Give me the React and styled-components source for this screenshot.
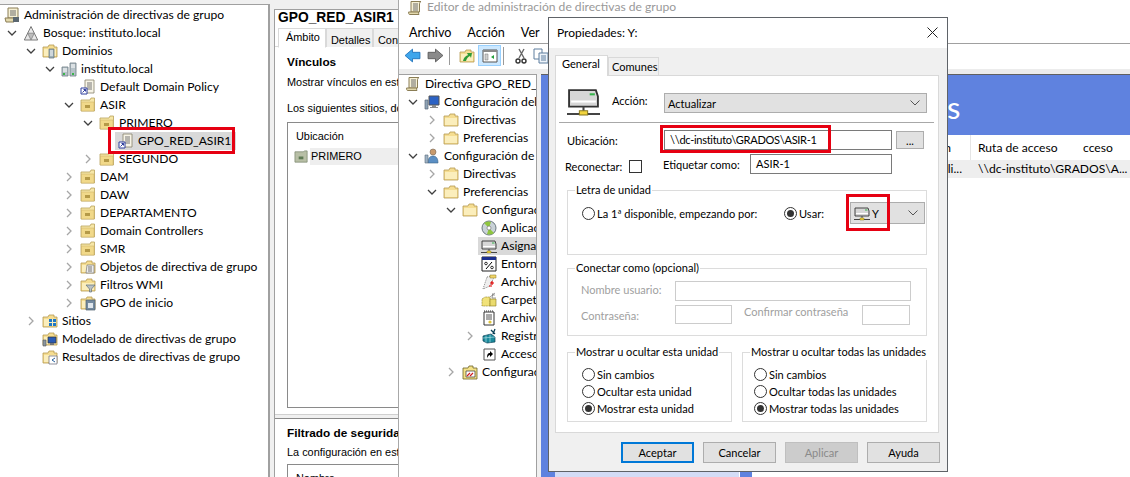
import React from 'react'
import styled, { createGlobalStyle } from 'styled-components'

const UI_FONT = 'Lato, "Open Sans", sans-serif'

const GlobalStyle = createGlobalStyle`
  html, body { margin: 0; padding: 0; background: #f0f0f0; }
  body { font-family: ${UI_FONT}; font-size: 12.1px; color: #000; }
  * { box-sizing: border-box; }
`

function Icon({ kind, size = 16 }) {
  const folder = (
    <>
      <path d="M1 4h5l1-2h5v2h3v10H1z" fill="#f5dd91" stroke="#b59a50" strokeWidth=".8" />
      <path d="M2 6h12v7H2z" fill="#fbeebc" />
    </>
  )
  const parts = {
    script: (
      <>
        <path d="M4 1h10v10H4z" fill="#f6f0d4" stroke="#8a7d55" />
        <path d="M6 4h6M6 6h6M6 8h6" stroke="#6d6d6d" />
        <path d="M1 11h9v4H2z" fill="#e3d9ad" stroke="#8a7d55" />
        <path d="M9 10h6v5H9z" fill="#5b6770" />
      </>
    ),
    scroll: (
      <>
        <path d="M4 1.5h10c-1 .5-1.500 1.500-1.500 2.500v8H4z" fill="#f6f0d4" stroke="#8a7d55" />
        <path d="M6 4h5M6 6h5M6 8h5M6 10h5" stroke="#6d6d6d" />
        <path d="M1.500 12h10c0 1.500 .5 2.500 .5 2.500H2.500c-.7 0-1-1.500-1-2.500z" fill="#e3d9ad" stroke="#8a7d55" />
      </>
    ),
    forest: (
      <>
        <path d="M8 1.500l6.700 13.500H1.300z" fill="#e8e8e8" stroke="#7a7a7a" />
        <path d="M4.700 8.200h6.600L8 15z" fill="#bcbcbc" stroke="#7a7a7a" strokeWidth=".7" />
      </>
    ),
    domains: (
      <>
        {folder}
        <path d="M7 6h5v9H7z" fill="#9fb0b8" stroke="#5c6d75" strokeWidth=".7" />
        <path d="M8 8h3M8 10h3M8 12h3" stroke="#fff" />
      </>
    ),
    domain: (
      <>
        <path d="M1 6h6v9H1zM9 2h6v13H9z" fill="#b6c2c8" stroke="#6c7c84" strokeWidth=".8" />
        <path d="M2 8h4M2 10h4M10 4h4M10 6h4" stroke="#fff" />
        <path d="M2 13h2M11 13h2" stroke="#39b54a" strokeWidth="2" />
      </>
    ),
    gpo: (
      <>
        <path d="M5 1h9v13H5z" fill="#f7f4e6" stroke="#85806a" strokeWidth=".8" />
        <path d="M7 4h5M7 6h5M7 8h5M7 10h5" stroke="#777" />
        <path d="M1 9h6v6H1z" fill="#fff" stroke="#2f3f9e" />
        <path d="M2.500 13.500l3-3M3.500 10.500h2v2" stroke="#2f3f9e" fill="none" />
      </>
    ),
    ou: (
      <>
        <path d="M1 3h9l1-2h3.500v13H1z" fill="#f6e6a6" stroke="#b9a25c" strokeWidth=".8" />
        <path d="M1.500 5h12.500v9H1.500z" fill="#f1d98a" stroke="#c9ad62" strokeWidth=".5" />
        <path d="M5 8h5v3H5z" fill="#b59a48" />
      </>
    ),
    ouGreen: (
      <>
        <path d="M1 3h9l1-1h3v12H1z" fill="#b8bfa6" stroke="#7f8a72" strokeWidth=".8" />
        <path d="M5 8h5v3H5z" fill="#5f7a55" />
      </>
    ),
    gpos: (
      <>
        {folder}
        <path d="M7 6h7v8H6z" fill="#eee" stroke="#777" strokeWidth=".7" />
        <path d="M8 8h4M8 10h4M8 12h4" stroke="#777" />
      </>
    ),
    filter: (
      <>
        {folder}
        <path d="M6 8h9l-3.500 4v3h-2v-3z" fill="#b9c0c4" stroke="#60707a" strokeWidth=".7" />
      </>
    ),
    starter: (
      <>
        {folder}
        <path d="M6 5h9v10H6z" fill="#748a9f" stroke="#4e5f6f" strokeWidth=".7" />
        <path d="M8 8h5v5H8z" fill="#dfe6ec" />
      </>
    ),
    sites: (
      <>
        {folder}
        <path d="M7 6h3v3H7zM11 6h3v3h-3zM7 10h3v3H7zM11 10h3v3h-3z" fill="#1f78c8" />
      </>
    ),
    model: (
      <>
        {folder}
        <path d="M6 6h8v6H6z" fill="#2a5bb5" stroke="#333" strokeWidth=".7" />
        <path d="M1 9h3v6H1z" fill="#8a96a0" stroke="#555" strokeWidth=".6" />
        <path d="M8 12h4v2H8z" fill="#777" />
      </>
    ),
    results: (
      <>
        {folder}
        <path d="M7 7h8v8H7z" fill="#fff" stroke="#667" strokeWidth=".7" />
        <path d="M13 9l-3 2 3 2" stroke="#27609c" fill="none" />
      </>
    ),
    computer: (
      <>
        <path d="M5 2h10v9H5z" fill="#2c62c4" stroke="#555" />
        <path d="M8 11h4v2H8zM6 13h8v1H6z" fill="#8b8b8b" />
        <path d="M1 6h3v9H1z" fill="#8fa3b5" stroke="#59697a" strokeWidth=".7" />
      </>
    ),
    user: (
      <>
        <circle cx="9" cy="4" r="3" fill="#c89a6c" stroke="#765" strokeWidth=".6" />
        <path d="M4 15c0-5 2-7 5-7s5 2 5 7z" fill="#5b8fc4" stroke="#3d6488" strokeWidth=".6" />
        <path d="M1 7h3v8H1z" fill="#9fb2c4" stroke="#59697a" strokeWidth=".6" />
      </>
    ),
    folder,
    disc: (
      <>
        <circle cx="8" cy="8" r="7" fill="#c9d2d8" stroke="#6b7780" />
        <path d="M8 8L3 3a7 7 0 0 1 7-1zM8 8l5 5a7 7 0 0 1-7 1z" fill="#8fc63f" />
        <circle cx="8" cy="8" r="2" fill="#fff" stroke="#666" strokeWidth=".6" />
      </>
    ),
    drive: (
      <>
        <path d="M1 3h13l1 3v5H1z" fill="#d6d6d6" stroke="#333" strokeWidth=".9" />
        <path d="M2 8h12v1H2z" fill="#fff" />
        <path d="M11 4.500h2.500v1H11z" fill="#34b34a" />
        <path d="M8 11v2" stroke="#444" />
        <path d="M0 14.500h16" stroke="#444" />
        <path d="M6 13h4v2H6z" fill="#f2d43d" stroke="#8a7a20" strokeWidth=".5" />
      </>
    ),
    percent: (
      <>
        <path d="M1 1h14v14H1z" fill="#fff" stroke="#222" />
        <path d="M1 1h14v3H1z" fill="#1c2f8f" />
        <path d="M5 13l6-7" stroke="#000" />
        <circle cx="5" cy="7.500" r="1.300" fill="none" stroke="#000" strokeWidth=".8" />
        <circle cx="11" cy="11.500" r="1.300" fill="none" stroke="#000" strokeWidth=".8" />
      </>
    ),
    fileRed: (
      <>
        <path d="M6 3l8-2-5 11-7 3z" fill="#efefef" stroke="#555" strokeWidth=".7" strokeDasharray="1 1" />
        <path d="M9 1h6v3H9z" fill="#f1d56a" stroke="#8a7a20" strokeWidth=".5" />
        <path d="M11 7v4M9 9h4M8 12h3" stroke="#e00000" strokeWidth="1.2" />
      </>
    ),
    folderStar: (
      <>
        <path d="M1 7l3-2h5v9H1z" fill="#f1e27a" stroke="#8a7a20" strokeWidth=".7" strokeDasharray="1 .6" />
        <path d="M9 5l5-4M11 6h4M11 3l3 0M12 1l-1 5" stroke="#777" strokeWidth=".7" />
        <path d="M9 7h6v7H9z" fill="#eadb6e" stroke="#8a7a20" strokeWidth=".6" />
      </>
    ),
    notepad: (
      <>
        <path d="M3 2h10v13H3z" fill="#fff" stroke="#333" />
        <path d="M3 1h10" stroke="#333" strokeDasharray="1 1" />
        <path d="M5 5h6M5 7h6M5 9h6" stroke="#555" />
        <circle cx="9" cy="12" r="1.600" fill="#e0c53a" />
      </>
    ),
    registry: (
      <>
        <path d="M2 8l8-2 4 3v5l-8 1-4-2z" fill="#1b8a9c" stroke="#0a3f55" strokeWidth=".7" />
        <path d="M2 10l12-1M5 7.500v7M9 6.500v8" stroke="#bfe9ef" strokeWidth=".6" />
        <path d="M10 2l4 4M14 1l-2 5" stroke="#0a3f55" strokeWidth="1.3" />
      </>
    ),
    shortcut: (
      <>
        <path d="M3 3h11v11H3z" fill="#fff" stroke="#555" />
        <path d="M6 12c0-4 1-5 3-5V5l3 3-3 3V9c-1 0-2 1-3 3z" fill="#000" />
      </>
    ),
    panel: (
      <>
        <path d="M1 4h5l1-2h4v2h4v11H1z" fill="#f3e187" stroke="#6d6226" strokeWidth=".8" />
        <path d="M4 7h9v6H4z" fill="#fff" stroke="#333" strokeWidth=".7" />
        <path d="M5 12l3-3M8 12l3-3" stroke="#d01c1c" strokeWidth="1.2" />
      </>
    ),
    back: (
      <path d="M1 8l7-6v3h7v6H8v3z" fill="#3fa6ec" stroke="#1c6fb8" strokeWidth=".8" />
    ),
    forward: (
      <path d="M15 8L8 2v3H1v6h7v3z" fill="#8a8a8a" stroke="#555" strokeWidth=".8" />
    ),
    up: (
      <>
        {folder}
        <path d="M4 13c1-4 3-5 5-6l-1-2 5 0-1 5-1-2c-2 1-3 2-4 5z" fill="#2f9a36" />
      </>
    ),
    view: (
      <>
        <path d="M1 2h14v12H1z" fill="#fff" stroke="#555" />
        <path d="M1 2h14v2H1z" fill="#8a8a8a" />
        <path d="M3 6h3v6H3z" fill="#cfcfcf" stroke="#777" strokeWidth=".5" />
        <path d="M12 7v4L9 9z" fill="#23a03c" />
      </>
    ),
    cut: (
      <>
        <path d="M11 1L6 10M6 1l5 9" stroke="#666" strokeWidth="1.4" />
        <circle cx="5" cy="13" r="2" fill="none" stroke="#333" strokeWidth="1.4" />
        <circle cx="11" cy="13" r="2" fill="none" stroke="#333" strokeWidth="1.4" />
      </>
    ),
    copy: (
      <>
        <path d="M1 1h8v10H1z" fill="#fff" stroke="#5f7f9f" />
        <path d="M6 5h9v10H6z" fill="#eef4fa" stroke="#5f7f9f" />
        <path d="M8 8h5M8 10h5M8 12h5" stroke="#5f7f9f" />
      </>
    ),
  }
  return (
    <svg width={size} height={size} viewBox="0 0 16 16" style={{ flex: 'none', display: 'block' }}>
      {parts[kind]}
    </svg>
  )
}

const Canvas = styled.div`
  position: relative;
  width: 1130px;
  height: 477px;
  overflow: hidden;
  background: #f0f0f0;
`

const ConsolePane = styled.section`
  position: absolute;
  left: 0;
  top: 4px;
  width: 270px;
  height: 473px;
  background: #fff;
  border-top: 1px solid #a0a0a0;
  border-right: 2px solid #a0a0a0;
  padding-top: 1px;
`

const TreeList = styled.div`
  display: flex;
  flex-direction: column;
  overflow: hidden;
`

const Row = styled.div`
  display: flex;
  align-items: center;
  height: 18px;
  white-space: nowrap;
  padding-left: ${p => p.$base + p.$depth * 19}px;
`

const CaretBox = styled.span`
  width: 16px;
  margin-left: -16px;
  flex: none;
  display: flex;
  justify-content: flex-start;
`

const Chip = styled.span`
  display: flex;
  align-items: center;
  gap: 4px;
  height: 18px;
  margin-left: ${p => (p.$selected ? -3 : 0)}px;
  padding: 0 ${p => (p.$selected ? 5 : 0)}px 0 ${p => (p.$selected ? 3 : 0)}px;
  background: ${p => (p.$selected ? '#d9d9d9' : 'transparent')};
  flex: ${p => (p.$fill ? 1 : 'none')};
`

const RowLabel = styled.span`
  position: relative;
  top: -1px;
`

function Caret({ state }) {
  if (!state) return <CaretBox />
  return (
    <CaretBox>
      <svg width="10" height="10" viewBox="0 0 10 10">
        {state === 'open' ? (
          <path d="M1 3l4 4 4-4" fill="none" stroke="#404040" strokeWidth="1.3" />
        ) : (
          <path d="M3 1l4 4-4 4" fill="none" stroke="#a6a6a6" strokeWidth="1.3" />
        )}
      </svg>
    </CaretBox>
  )
}

function Tree({ items, base }) {
  return (
    <TreeList>
      {items.map(([depth, caret, kind, label, selected, fill], i) => (
        <Row key={i} $base={base} $depth={depth}>
          <Caret state={caret} />
          <Chip $selected={selected} $fill={fill}>
            <Icon kind={kind} />
            <RowLabel>{label}</RowLabel>
          </Chip>
        </Row>
      ))}
    </TreeList>
  )
}

const consoleTree = [
  [0, null, 'script', 'Administración de directivas de grupo'],
  [1, 'open', 'forest', 'Bosque: instituto.local'],
  [2, 'open', 'domains', 'Dominios'],
  [3, 'open', 'domain', 'instituto.local'],
  [4, null, 'gpo', 'Default Domain Policy'],
  [4, 'open', 'ou', 'ASIR'],
  [5, 'open', 'ou', 'PRIMERO'],
  [6, null, 'gpo', 'GPO_RED_ASIR1', true],
  [5, 'closed', 'ou', 'SEGUNDO'],
  [4, 'closed', 'ou', 'DAM'],
  [4, 'closed', 'ou', 'DAW'],
  [4, 'closed', 'ou', 'DEPARTAMENTO'],
  [4, 'closed', 'ou', 'Domain Controllers'],
  [4, 'closed', 'ou', 'SMR'],
  [4, 'closed', 'gpos', 'Objetos de directiva de grupo'],
  [4, 'closed', 'filter', 'Filtros WMI'],
  [4, 'closed', 'starter', 'GPO de inicio'],
  [2, 'closed', 'sites', 'Sitios'],
  [2, null, 'model', 'Modelado de directivas de grupo'],
  [2, null, 'results', 'Resultados de directivas de grupo'],
]

const editorTree = [
  [0, null, 'scroll', 'Directiva GPO_RED_ASIR1'],
  [1, 'open', 'computer', 'Configuración del equipo'],
  [2, 'closed', 'folder', 'Directivas'],
  [2, 'closed', 'folder', 'Preferencias'],
  [1, 'open', 'user', 'Configuración de usuario'],
  [2, 'closed', 'folder', 'Directivas'],
  [2, 'open', 'folder', 'Preferencias'],
  [3, 'open', 'folder', 'Configuración de Windows'],
  [4, null, 'disc', 'Aplicaciones'],
  [4, null, 'drive', 'Asignaciones de unidades', true, true],
  [4, null, 'percent', 'Entorno'],
  [4, null, 'fileRed', 'Archivos'],
  [4, null, 'folderStar', 'Carpetas'],
  [4, null, 'notepad', 'Archivos ini'],
  [4, 'closed', 'registry', 'Registro'],
  [4, null, 'shortcut', 'Accesos directos'],
  [3, 'closed', 'panel', 'Configuración del Panel de control'],
]

const SelectionBox = styled.div`
  position: absolute;
  left: ${p => p.$x}px;
  top: ${p => p.$y}px;
  width: ${p => p.$w}px;
  height: ${p => p.$h}px;
  border: 3px solid #e60012;
  pointer-events: none;
  z-index: 5;
`

const ScopePane = styled.section`
  position: absolute;
  left: 274px;
  top: 9px;
  width: 130px;
  height: 468px;
  background: #fff;
  border-top: 1px solid #a0a0a0;
  border-left: 1px solid #a0a0a0;
  overflow: hidden;
  font-family: "Liberation Sans", Arial, sans-serif;
  font-size: 10.9px;
  white-space: nowrap;
`

const ScopeTitle = styled.h2`
  margin: 0;
  height: 18px;
  padding: 0 0 0 3px;
  font-size: 13.8px;
  line-height: 15px;
  font-weight: 700;
`

const ScopeTabs = styled.div`
  display: flex;
  height: 19px;
  padding-left: 3px;
  border-bottom: 1px solid #d9d9d9;
`

const ScopeTab = styled.div`
  flex: none;
  width: ${p => p.$w}px;
  padding: ${p => (p.$active ? '2px 0 0 7px' : '5px 0 0 4px')};
  border: 1px solid #d9d9d9;
  border-bottom: ${p => (p.$active ? '1px solid #fff' : 'none')};
  background: ${p => (p.$active ? '#fff' : '#f0f0f0')};
  height: ${p => (p.$active ? 20 : 19)}px;
`

const ScopeBody = styled.div`
  padding: ${p => p.$top}px 0 0 12px;
`

const ScopeHeading = styled.div`
  font-weight: 700;
  font-size: 11.8px;
  height: 16px;
`

const ScopeText = styled.div`
  margin-top: ${p => p.$gap}px;
  height: 14px;
`

const ListBox = styled.div`
  margin-top: ${p => p.$gap}px;
  height: ${p => p.$h}px;
  border: 1px solid #8a8a8a;
  padding: 7px 0 0 6px;
`

const ListHeader = styled.div`
  padding-left: 2px;
`

const ListRow = styled.div`
  margin-top: 6px;
  display: flex;
  align-items: center;
  height: 17px;
  gap: 1px;
`

const ListCell = styled.span`
  flex: 1;
  background: #eeeeee;
  line-height: 17px;
  padding-left: 1px;
`

const Splitter = styled.div`
  margin: 6px 0 0;
  height: 5px;
  background: #f0f0f0;
  border-top: 1px solid #d0d0d0;
  border-bottom: 1px solid #8a8a8a;
`

const EditorWindow = styled.section`
  position: absolute;
  left: 398px;
  top: 0;
  width: 732px;
  height: 477px;
  background: #fff;
  border-left: 1px solid #a8a8a8;
  display: flex;
  flex-direction: column;
`

const EditorTitle = styled.div`
  height: 20px;
  display: flex;
  align-items: flex-start;
  gap: 4px;
  padding-left: 8px;
  color: #999;
  line-height: 13px;
`

const MenuBar = styled.div`
  height: 24px;
  display: flex;
  gap: 16px;
  padding: 5px 0 0 10px;
  border-bottom: 1px solid #a0a0a0;
  font-size: 12.6px;
`

const Toolbar = styled.div`
  height: 23px;
  display: flex;
  align-items: center;
  padding-left: 2px;
`

const ToolButton = styled.span`
  flex: none;
  width: ${p => p.$w || 23}px;
  height: 21px;
  display: flex;
  align-items: center;
  justify-content: center;
  border: 1px solid ${p => (p.$on ? '#99d1ff' : 'transparent')};
  background: ${p => (p.$on ? '#cce8ff' : 'transparent')};
`

const ToolSeparator = styled.span`
  flex: none;
  width: 1px;
  height: 18px;
  background: #9a9a9a;
  margin: 0 ${p => p.$right}px 0 ${p => p.$left}px;
`

const ToolStrip = styled.div`
  height: 7px;
  background: linear-gradient(#fff 0, #fff 2px, #ececec 2px);
`

const EditorMain = styled.div`
  flex: 1;
  display: flex;
  min-height: 0;
`

const EditorTreePane = styled.div`
  width: 138px;
  flex: none;
  background: #fff;
  border-top: 1px solid #a0a0a0;
  border-right: 1px solid #a0a0a0;
  overflow: hidden;
`

const PaneGap = styled.div`
  width: 4px;
  flex: none;
  background: #f0f0f0;
`

const ResultPane = styled.div`
  flex: 1;
  display: flex;
  flex-direction: column;
  border-top: 1px solid #606060;
`

const Banner = styled.div`
  height: 60px;
  flex: none;
  background: #5f82df;
  color: #fff;
  font-size: 31px;
  padding: 12px 0 0 406px;
  line-height: 40px;
`

const ResultBody = styled.div`
  flex: 1;
  display: flex;
`

const BlueColumn = styled.div`
  width: 211px;
  flex: none;
  background: #5f82df;
  position: relative;
`

const PaleInset = styled.div`
  position: absolute;
  left: 14px;
  width: 185px;
  bottom: 0;
  height: 5px;
  background: #d3dcf6;
  border-right: 1px solid #fff;
`

const ResultTable = styled.div`
  flex: 1;
  display: grid;
  grid-template-columns: 219px 105px 1fr;
  grid-auto-rows: min-content;
  white-space: nowrap;
`

const HeadCell = styled.div`
  height: 25px;
  line-height: 25px;
  padding: ${p => (p.$end ? '0 19px 0 0' : '0 0 0 7px')};
  text-align: ${p => (p.$end ? 'right' : 'left')};
  border-right: ${p => (p.$end ? '1px solid #e5e5e5' : 'none')};
`

const BodyCell = styled.div`
  height: 18px;
  line-height: 18px;
  background: #eeeeee;
  grid-column: ${p => (p.$span ? 'span 2' : 'auto')};
  padding: ${p => (p.$end ? '0 9px 0 0' : '0 0 0 7px')};
  text-align: ${p => (p.$end ? 'right' : 'left')};
`

const Dialog = styled.section`
  position: absolute;
  left: 548px;
  top: 17px;
  width: 400px;
  height: 455px;
  border: 1px solid #5f6368;
  background: #f0f0f0;
  display: flex;
  flex-direction: column;
  font-size: 11.05px;
`

const DialogHead = styled.header`
  height: 30px;
  flex: none;
  background: #fff;
  display: flex;
  align-items: center;
  justify-content: space-between;
  padding: 0 9px 2px 8px;
  font-size: 12px;
`

const DialogBody = styled.div`
  padding: 7px 8px 0 6px;
  flex: 1;
`

const Tabs = styled.div`
  display: flex;
  height: 20px;
  align-items: flex-end;
  position: relative;
  z-index: 1;
`

const Tab = styled.div`
  width: ${p => p.$w}px;
  height: ${p => (p.$active ? 21 : 18)}px;
  margin-bottom: ${p => (p.$active ? -1 : 0)}px;
  padding: ${p => (p.$active ? '1px 0 0 6px' : '2px 0 0 3px')};
  background: ${p => (p.$active ? '#fff' : '#f0f0f0')};
  border: 1px solid #d9d9d9;
  border-bottom: none;
`

const TabPanel = styled.div`
  width: 384px;
  height: 358px;
  background: #fff;
  border: 1px solid #d9d9d9;
  padding: 0 0 0 11px;
`

const ActionRow = styled.div`
  display: flex;
  height: 32px;
  margin-top: 8px;
`

const ActionLabel = styled.span`
  margin: 10px 0 0 12px;
  width: 52px;
  flex: none;
`

const Select = styled.div`
  flex: none;
  margin-top: ${p => p.$top || 0}px;
  width: ${p => p.$w}px;
  height: ${p => p.$h}px;
  background: #e1e1e1;
  border: 1px solid #adadad;
  display: flex;
  align-items: center;
  justify-content: space-between;
  padding: 0 6px 0 3px;
`

const Chevron = () => (
  <svg width="10" height="6" viewBox="0 0 10 6">
    <path d="M.5.5L5 5 9.500.5" fill="none" stroke="#555" />
  </svg>
)

const Rule = styled.hr`
  margin: 6px 0 0 -8px;
  width: 375px;
  height: 1px;
  border: 0;
  background: #a8a8a8;
`

const FormRow = styled.div`
  display: flex;
  align-items: center;
  height: ${p => p.$h || 20}px;
  margin-top: ${p => p.$gap}px;
`

const FieldLabel = styled.span`
  flex: none;
  width: ${p => p.$w}px;
  margin-left: ${p => p.$left || 0}px;
  color: ${p => (p.$muted ? '#a0a0a0' : '#000')};
  position: relative;
  white-space: nowrap;
  top: ${p => p.$lift || 0}px;
`

const Input = styled.div`
  flex: none;
  width: ${p => p.$w}px;
  height: ${p => p.$h || 20}px;
  margin-left: ${p => p.$left || 0}px;
  border: 1px solid ${p => (p.$muted ? '#ccc' : '#7a7a7a')};
  padding-left: 5px;
  line-height: 18px;
  white-space: nowrap;
  letter-spacing: ${p => p.$track || 0}px;
`

const SmallButton = styled.div`
  flex: none;
  width: 28px;
  height: 18px;
  margin-left: 4px;
  background: #e1e1e1;
  border: 1px solid #adadad;
  text-align: center;
  line-height: 17px;
`

const CheckBox = styled.span`
  flex: none;
  width: 13px;
  height: 13px;
  margin-top: 4px;
  border: 1px solid #333;
  background: #fff;
`

const Group = styled.div`
  position: relative;
  flex: none;
  width: ${p => p.$w}px;
  height: ${p => p.$h}px;
  margin-top: ${p => p.$gap || 0}px;
  border: 1px solid #dcdcdc;
`

const Legend = styled.span`
  position: absolute;
  left: 7px;
  top: -9px;
  padding: 0 1px;
  background: #fff;
  line-height: 16px;
  white-space: nowrap;
`

const DriveRow = styled.div`
  display: flex;
  align-items: center;
  height: 22px;
  margin: 11px 0 0 14px;
`

const RadioOption = styled.label`
  display: flex;
  align-items: center;
  gap: 2px;
  flex: none;
  width: ${p => (p.$w ? `${p.$w}px` : 'auto')};
  height: 17px;
  white-space: nowrap;
`

const RadioDot = styled.span`
  flex: none;
  position: relative;
  width: 13px;
  height: 13px;
  border-radius: 50%;
  border: 1px solid #333;
  background: #fff;
  &::after {
    content: '';
    display: ${p => (p.$on ? 'block' : 'none')};
    position: absolute;
    inset: 2px;
    border-radius: 50%;
    background: #333;
  }
`

const Radio = ({ on, w, children }) => (
  <RadioOption $w={w}>
    <RadioDot $on={on} />
    {children}
  </RadioOption>
)

const DriveValue = styled.span`
  display: flex;
  align-items: center;
  gap: 2px;
`

const Credentials = styled.div`
  padding: 12px 0 0 13px;
`

const VisibilityRow = styled.div`
  display: flex;
  gap: 10px;
  margin-top: 16px;
`

const RadioStack = styled.div`
  display: flex;
  flex-direction: column;
  padding: 13px 0 0 ${p => p.$left}px;
`

const DialogFooter = styled.footer`
  display: flex;
  justify-content: flex-end;
  gap: 9px;
  margin-top: 9px;
  margin-right: -1px;
`

const Button = styled.div`
  width: 73px;
  height: 21px;
  text-align: center;
  line-height: ${p => (p.$primary ? 17 : 19)}px;
  background: ${p => (p.$disabled ? '#cccccc' : '#e1e1e1')};
  color: ${p => (p.$disabled ? '#8a8a8a' : '#000')};
  border: ${p => (p.$primary ? '2px solid #0078d7' : `1px solid ${p.$disabled ? '#bfbfbf' : '#adadad'}`)};
`

const CloseGlyph = () => (
  <svg width="11" height="11" viewBox="0 0 11 11">
    <path d="M.5.5l10 10M10.500.5l-10 10" stroke="#222" />
  </svg>
)

export default function App() {
  return (
    <Canvas>
      <GlobalStyle />

      <ConsolePane>
        <Tree items={consoleTree} base={4} />
      </ConsolePane>
      <SelectionBox $x={108} $y={127} $w={127} $h={27} />

      <ScopePane>
        <ScopeTitle>GPO_RED_ASIR1</ScopeTitle>
        <ScopeTabs>
          <ScopeTab $active $w={48}>Ámbito</ScopeTab>
          <ScopeTab $w={47}>Detalles</ScopeTab>
          <ScopeTab $w={30}>Configuración</ScopeTab>
        </ScopeTabs>
        <ScopeBody $top={8}>
          <ScopeHeading>Vínculos</ScopeHeading>
          <ScopeText $gap={5}>Mostrar vínculos en esta ubicación:</ScopeText>
          <ScopeText $gap={12}>Los siguientes sitios, dominios y unidades</ScopeText>
          <ListBox $gap={6} $h={286}>
            <ListHeader>Ubicación</ListHeader>
            <ListRow>
              <Icon kind="ouGreen" size={15} />
              <ListCell>PRIMERO</ListCell>
            </ListRow>
          </ListBox>
        </ScopeBody>
        <Splitter />
        <ScopeBody $top={7}>
          <ScopeHeading>Filtrado de seguridad</ScopeHeading>
          <ScopeText $gap={4}>La configuración en este GPO</ScopeText>
          <ListBox $gap={4} $h={40}>
            <ListHeader>Nombre</ListHeader>
          </ListBox>
        </ScopeBody>
      </ScopePane>

      <EditorWindow>
        <EditorTitle>
          <Icon kind="scroll" />
          Editor de administración de directivas de grupo
        </EditorTitle>
        <MenuBar>
          <span>Archivo</span>
          <span>Acción</span>
          <span>Ver</span>
        </MenuBar>
        <Toolbar>
          <ToolButton><Icon kind="back" size={17} /></ToolButton>
          <ToolButton><Icon kind="forward" size={17} /></ToolButton>
          <ToolSeparator $left={2} $right={6} />
          <ToolButton $w={22}><Icon kind="up" /></ToolButton>
          <ToolButton $on $w={23}><Icon kind="view" /></ToolButton>
          <ToolSeparator $left={2} $right={9} />
          <ToolButton $w={16}><Icon kind="cut" /></ToolButton>
          <ToolButton $w={24}><Icon kind="copy" /></ToolButton>
        </Toolbar>
        <ToolStrip />
        <EditorMain>
          <EditorTreePane>
            <Tree items={editorTree} base={6} />
          </EditorTreePane>
          <PaneGap />
          <ResultPane>
            <Banner>s</Banner>
            <ResultBody>
              <BlueColumn>
                <PaleInset />
              </BlueColumn>
              <ResultTable>
                <HeadCell $end>n</HeadCell>
                <HeadCell>Ruta de acceso</HeadCell>
                <HeadCell>cceso</HeadCell>
                <BodyCell $end>li...</BodyCell>
                <BodyCell $span>{'\\\\dc-instituto\\GRADOS\\A...'}</BodyCell>
              </ResultTable>
            </ResultBody>
          </ResultPane>
        </EditorMain>
      </EditorWindow>

      <Dialog>
        <DialogHead>
          <span>Propiedades: Y:</span>
          <CloseGlyph />
        </DialogHead>
        <DialogBody>
          <Tabs>
            <Tab $active $w={53}>General</Tab>
            <Tab $w={51}>Comunes</Tab>
          </Tabs>
          <TabPanel>
            <ActionRow>
              <Icon kind="drive" size={33} />
              <ActionLabel>Acción:</ActionLabel>
              <Select $top={9} $w={263} $h={20}>
                <span>Actualizar</span>
                <Chevron />
              </Select>
            </ActionRow>
            <Rule />
            <FormRow $gap={7}>
              <FieldLabel $w={97}>Ubicación:</FieldLabel>
              <Input $w={228} $track={-0.3}>{'\\\\dc-instituto\\GRADOS\\ASIR-1'}</Input>
              <SmallButton>...</SmallButton>
            </FormRow>
            <FormRow $gap={4}>
              <FieldLabel $w={64} $left={-2} $lift={2}>Reconectar:</FieldLabel>
              <CheckBox />
              <FieldLabel $w={87} $left={21}>Etiquetar como:</FieldLabel>
              <Input $w={142}>ASIR-1</Input>
            </FormRow>
            <Group $w={360} $h={65} $gap={16}>
              <Legend>Letra de unidad</Legend>
              <DriveRow>
                <Radio w={202}>La 1ª disponible, empezando por:</Radio>
                <Radio on w={66}>Usar:</Radio>
                <Select $w={75} $h={22}>
                  <DriveValue><Icon kind="drive" />Y</DriveValue>
                  <Chevron />
                </Select>
              </DriveRow>
            </Group>
            <Group $w={360} $h={68} $gap={13}>
              <Legend>Conectar como (opcional)</Legend>
              <Credentials>
                <FormRow $gap={0}>
                  <FieldLabel $w={94} $muted $lift={-2}>Nombre usuario:</FieldLabel>
                  <Input $w={236} $muted />
                </FormRow>
                <FormRow $gap={4} $h={19}>
                  <FieldLabel $w={94} $muted $lift={1}>Contraseña:</FieldLabel>
                  <Input $w={57} $h={19} $muted />
                  <FieldLabel $w={118} $left={12} $muted $lift={-3}>Confirmar contraseña</FieldLabel>
                  <Input $w={48} $muted />
                </FormRow>
              </Credentials>
            </Group>
            <VisibilityRow>
              <Group $w={165} $h={70}>
                <Legend>Mostrar u ocultar esta unidad</Legend>
                <RadioStack $left={14}>
                  <Radio>Sin cambios</Radio>
                  <Radio>Ocultar esta unidad</Radio>
                  <Radio on>Mostrar esta unidad</Radio>
                </RadioStack>
              </Group>
              <Group $w={185} $h={70}>
                <Legend>Mostrar u ocultar todas las unidades</Legend>
                <RadioStack $left={11}>
                  <Radio>Sin cambios</Radio>
                  <Radio>Ocultar todas las unidades</Radio>
                  <Radio on>Mostrar todas las unidades</Radio>
                </RadioStack>
              </Group>
            </VisibilityRow>
          </TabPanel>
          <DialogFooter>
            <Button $primary>Aceptar</Button>
            <Button>Cancelar</Button>
            <Button $disabled>Aplicar</Button>
            <Button>Ayuda</Button>
          </DialogFooter>
        </DialogBody>
      </Dialog>
      <SelectionBox $x={660} $y={125} $w={171} $h={28} />
      <SelectionBox $x={846} $y={194} $w={44} $h={37} />
    </Canvas>
  )
}
